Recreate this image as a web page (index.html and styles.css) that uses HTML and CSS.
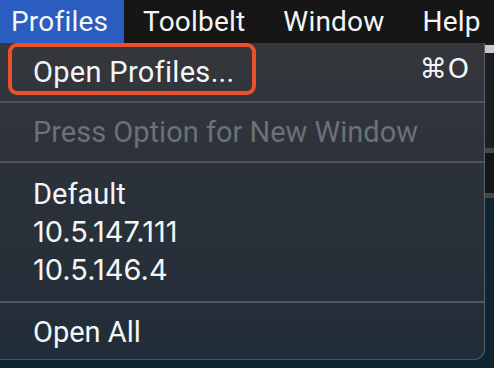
FILE: index.html
```html
<!DOCTYPE html>
<html lang="en">
<head>
    <meta charset="UTF-8">
    <meta name="viewport" content="width=device-width, initial-scale=1.0">
    <title>Profiles Menu</title>
    <link rel="stylesheet" href="styles.css">
</head>
<body>
    <div class="menubar">
        <span class="menu active">Profiles</span>
        <span class="menu">Toolbelt</span>
        <span class="menu">Window</span>
        <span class="menu">Help</span>
    </div>

    <div class="desk">
        <div class="dropdown">
            <div class="item first">
                <span class="highlight">Open Profiles...</span>
                <span class="shortcut">⌘O</span>
            </div>
            <div class="sep sep-1"></div>
            <div class="item disabled">Press Option for New Window</div>
            <div class="sep sep-2"></div>
            <div class="item">Default</div>
            <div class="item addr">10.5.147.111</div>
            <div class="item addr">10.5.146.4</div>
            <div class="sep sep-3"></div>
            <div class="item">Open All</div>
        </div>

        <!-- edge of the window behind the menu -->
        <div class="behind">
            <div class="strip light"></div>
            <div class="strip dark"></div>
            <div class="strip line"></div>
            <div class="strip darker"></div>
            <div class="strip line"></div>
        </div>
    </div>
</body>
</html>
```

FILE: styles.css
```css
html, body {
    margin: 0;
    padding: 0;
}
body {
    width: 494px;
    height: 368px;
    overflow: hidden;
    background: #0e2531;
    font-family: Roboto, "Noto Sans", "DejaVu Sans", sans-serif;
    color: #f4f5f6;
}

.menubar {
    height: 43px;
    display: flex;
    align-items: center;
    background: #161616;
    font-size: 28px;
}
.menu {
    height: 43px;
    line-height: 43px;
    padding: 0 19px;
    letter-spacing: 0.2px;
}
.menu.active {
    background: #2a5dbf;
    padding: 0 16px 0 11px;
}

.desk {
    display: flex;
    align-items: flex-start;
}

.dropdown {
    width: 485px;
    flex: none;
    box-sizing: border-box;
    padding-bottom: 8px;
    background: linear-gradient(#35373c, #2b3139 45%, #212d38);
    border-right: 1px solid #5d6368;
    border-bottom: 1px solid #4b555c;
    border-bottom-right-radius: 11px;
    font-size: 29px;
}

.item {
    height: 38px;
    line-height: 38px;
    padding: 0 17px 0 33px;
    white-space: nowrap;
}
.item.first {
    height: 52px;
    padding-left: 8px;
    padding-right: 14px;
    display: flex;
    align-items: center;
    justify-content: space-between;
}
.highlight {
    box-sizing: border-box;
    height: 52px;
    line-height: 46px;
    padding: 2px 0 0 21px;
    width: 248px;
    letter-spacing: 0.3px;
    border: 4px solid #ea512a;
    border-radius: 9px;
}
.shortcut {
    font-family: "DejaVu Sans", Roboto, sans-serif;
    font-size: 27px;
    letter-spacing: 1px;
}
.addr {
    font-family: Inter, Roboto, sans-serif;
}
.disabled {
    color: #6b7079;
}

.sep {
    height: 2px;
    background: #4d555d;
}
.sep-1 { margin: 6px 0 10px; }
.sep-2 { margin: 10px 0 12px; }
.sep-3 { margin: 12px 0 10px; }

.behind {
    flex: 1;
    display: flex;
    flex-direction: column;
}
.strip.light { height: 8px; margin-top: 2px; background: #c9cacb; }
.strip.dark { height: 95px; background: #1d1e1f; }
.strip.line { height: 5px; background: #444648; }
.strip.darker { height: 40px; background: #151515; }
```
